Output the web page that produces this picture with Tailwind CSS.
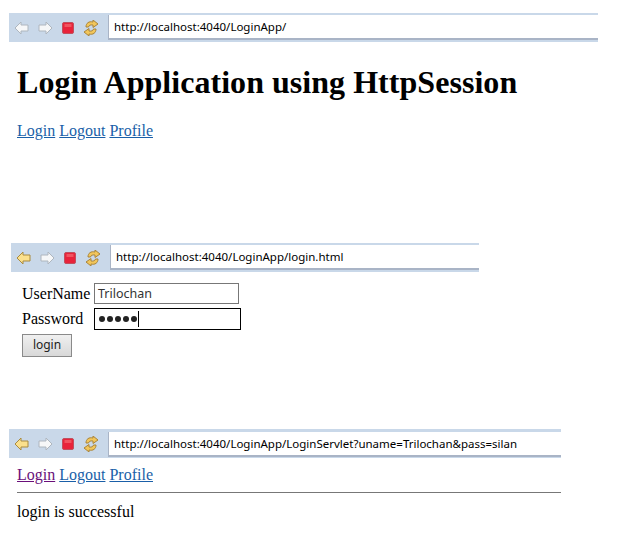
<!DOCTYPE html>
<html lang="en">
<head>
    <meta charset="UTF-8">
    <title>Login Application using HttpSession</title>
    <script src="https://cdn.jsdelivr.net/npm/@tailwindcss/browser@4"></script>
</head>
<body class="bg-white text-black font-['Liberation_Serif',serif] w-[621px] h-[545px] overflow-hidden">

    <!-- Home page -->
    <div class="ml-[9px] mt-[13px] w-[589px] h-[29px] bg-[#c9d8e9] flex items-start">
        <div class="w-[99px] h-[29px] flex items-center gap-[9px] pl-[5px]">
            <svg width="15" height="14" viewBox="0 0 15 14"><path d="M1 7 7 1v3h7v6H7v3z" fill="#f6f7f8" stroke="#aeb6be"/></svg>
            <svg width="15" height="14" viewBox="0 0 15 14"><path d="M14 7 8 1v3H1v6h7v3z" fill="#f6f7f8" stroke="#aeb6be"/></svg>
            <svg width="12" height="12" viewBox="0 0 12 12"><rect x=".5" y=".5" width="11" height="11" rx="1.500" fill="#e8233a" stroke="#c0505e"/><rect x="2.500" y="2" width="7" height="3" fill="#f0545f"/></svg>
            <svg width="16" height="16" viewBox="0 0 16 16"><g fill="#f2c65a" stroke="#a9843a"><path d="M2 8C2 4 5 2 9 3V1l5 4-5 3.500V6C6 5.500 5 6.500 4.500 8z" transform="translate(1 -1)"/><path d="M2 8C2 4 5 2 9 3V1l5 4-5 3.500V6C6 5.500 5 6.500 4.500 8z" transform="translate(-1 1) rotate(180 8 8)"/></g></svg>
        </div>
        <div class="flex-1 h-[25px] mt-[2px] bg-white border-l border-b-2 border-[#a9b4c6] font-['Noto_Sans',sans-serif] text-[11.5px] leading-[24px] pl-[5px]">http://localhost:4040/LoginApp/</div>
    </div>
    <h1 class="ml-[17px] mt-[22px] text-[32px] tracking-[0.04px] leading-[36px] font-bold">Login Application using HttpSession</h1>
    <p class="ml-[17px] mt-[22px] text-[16px] leading-[18px] text-[#1a5fa8]">
        <a href="#" class="underline">Login</a> <a href="#" class="underline">Logout</a> <a href="#" class="underline">Profile</a>
    </p>

    <!-- Login form -->
    <div class="ml-[11px] mt-[103px] w-[468px] h-[29px] bg-[#c9d8e9] flex items-start">
        <div class="w-[99px] h-[29px] flex items-center gap-[9px] pl-[5px]">
            <svg width="15" height="14" viewBox="0 0 15 14"><path d="M1 7 7 1v3h7v6H7v3z" fill="#fbe08c" stroke="#a98a3e"/></svg>
            <svg width="15" height="14" viewBox="0 0 15 14"><path d="M14 7 8 1v3H1v6h7v3z" fill="#f6f7f8" stroke="#aeb6be"/></svg>
            <svg width="12" height="12" viewBox="0 0 12 12"><rect x=".5" y=".5" width="11" height="11" rx="1.500" fill="#e8233a" stroke="#c0505e"/><rect x="2.500" y="2" width="7" height="3" fill="#f0545f"/></svg>
            <svg width="16" height="16" viewBox="0 0 16 16"><g fill="#f2c65a" stroke="#a9843a"><path d="M2 8C2 4 5 2 9 3V1l5 4-5 3.500V6C6 5.500 5 6.500 4.500 8z" transform="translate(1 -1)"/><path d="M2 8C2 4 5 2 9 3V1l5 4-5 3.500V6C6 5.500 5 6.500 4.500 8z" transform="translate(-1 1) rotate(180 8 8)"/></g></svg>
        </div>
        <div class="flex-1 h-[25px] mt-[2px] bg-white border-l border-b-2 border-[#a9b4c6] font-['Noto_Sans',sans-serif] text-[11.5px] leading-[24px] pl-[5px]">http://localhost:4040/LoginApp/login.html</div>
    </div>
    <div class="ml-[22px] mt-[11px] flex flex-col">
        <div class="flex items-center h-[21px]">
            <span class="w-[72px] text-[16px]">UserName</span>
            <div class="w-[145px] h-[21px] border border-[#777] font-['Noto_Sans',sans-serif] text-[12.5px] leading-[19px] pl-[3px] text-[#333]">Trilochan</div>
        </div>
        <div class="flex items-center h-[22px] mt-[4px]">
            <span class="w-[72px] text-[16px]">Password</span>
            <div class="w-[147px] h-[22px] border border-black flex items-center pl-[4px]">
                <div class="flex gap-[2px]">
                    <span class="w-[6px] h-[6px] rounded-full bg-[#222]"></span>
                    <span class="w-[6px] h-[6px] rounded-full bg-[#222]"></span>
                    <span class="w-[6px] h-[6px] rounded-full bg-[#222]"></span>
                    <span class="w-[6px] h-[6px] rounded-full bg-[#222]"></span>
                    <span class="w-[6px] h-[6px] rounded-full bg-[#222]"></span>
                </div>
                <span class="ml-px w-px h-[16px] bg-black"></span>
            </div>
        </div>
        <button type="button" class="mt-[4px] w-[50px] h-[23px] pb-px border border-[#8a8a8a] bg-gradient-to-b from-[#f0f0f0] to-[#d8d8d8] font-['Noto_Sans',sans-serif] text-[12px] text-[#222]">login</button>
    </div>

    <!-- After login -->
    <div class="ml-[9px] mt-[72px] w-[552px] h-[29px] bg-[#c9d8e9] flex items-start">
        <div class="w-[99px] h-[29px] flex items-center gap-[9px] pl-[5px]">
            <svg width="15" height="14" viewBox="0 0 15 14"><path d="M1 7 7 1v3h7v6H7v3z" fill="#fbe08c" stroke="#a98a3e"/></svg>
            <svg width="15" height="14" viewBox="0 0 15 14"><path d="M14 7 8 1v3H1v6h7v3z" fill="#f6f7f8" stroke="#aeb6be"/></svg>
            <svg width="12" height="12" viewBox="0 0 12 12"><rect x=".5" y=".5" width="11" height="11" rx="1.500" fill="#e8233a" stroke="#c0505e"/><rect x="2.500" y="2" width="7" height="3" fill="#f0545f"/></svg>
            <svg width="16" height="16" viewBox="0 0 16 16"><g fill="#f2c65a" stroke="#a9843a"><path d="M2 8C2 4 5 2 9 3V1l5 4-5 3.500V6C6 5.500 5 6.500 4.500 8z" transform="translate(1 -1)"/><path d="M2 8C2 4 5 2 9 3V1l5 4-5 3.500V6C6 5.500 5 6.500 4.500 8z" transform="translate(-1 1) rotate(180 8 8)"/></g></svg>
        </div>
        <div class="flex-1 h-[25px] mt-[3px] bg-white border-l border-b-2 border-[#a9b4c6] font-['Noto_Sans',sans-serif] text-[11.5px] leading-[23px] pl-[5px]">http://localhost:4040/LoginApp/LoginServlet?uname=Trilochan&amp;pass=silan</div>
    </div>
    <p class="ml-[17px] mt-[8px] text-[16px] leading-[18px] text-[#1a5fa8]">
        <a href="#" class="underline text-[#6a0f7a]">Login</a> <a href="#" class="underline">Logout</a> <a href="#" class="underline">Profile</a>
    </p>
    <hr class="ml-[17px] mt-[8px] w-[544px] border-t border-[#777]">
    <p class="ml-[17px] mt-[10px] text-[16px] leading-[18px]">login is successful</p>
</body>
</html>
